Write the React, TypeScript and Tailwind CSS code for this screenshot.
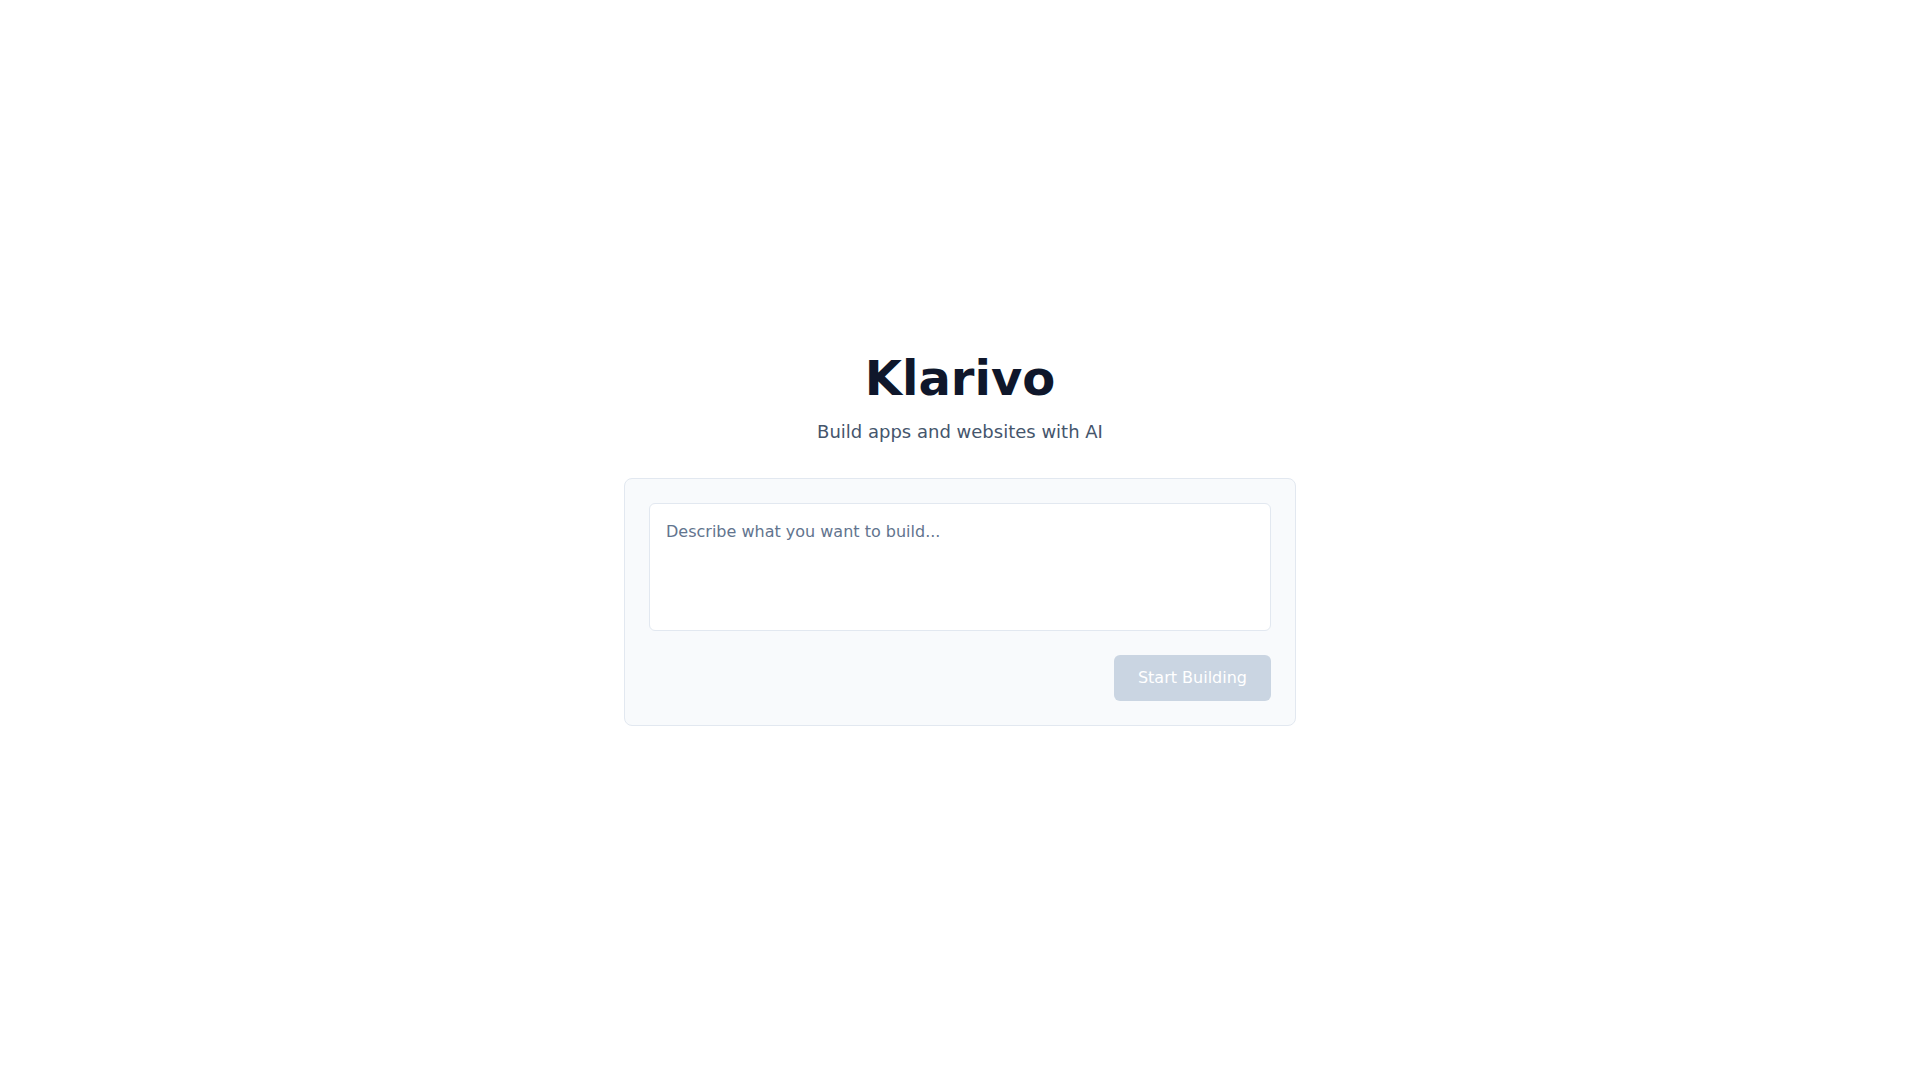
import { useState } from 'react';

export default function App() {
  const [prompt, setPrompt] = useState('');
  const disabled = prompt.trim().length === 0;

  return (
    <div className="flex min-h-screen flex-col items-center justify-center bg-white px-4 font-['DejaVu_Sans',sans-serif]">
      <h1 className="text-5xl font-bold text-slate-900">Klarivo</h1>
      <p className="mt-4 mb-8 text-lg text-slate-600">Build apps and websites with AI</p>

      <div className="w-full max-w-2xl rounded-lg border border-slate-200 bg-slate-50 p-6">
        <textarea
          value={prompt}
          onChange={(e) => setPrompt(e.target.value)}
          placeholder="Describe what you want to build..."
          className="block h-32 w-full resize-none rounded-md border border-slate-200 bg-white p-4 text-base text-slate-900 placeholder:text-slate-500 focus:outline-none"
        />
        <div className="mt-6 flex justify-end">
          <button
            disabled={disabled}
            className="rounded-md bg-slate-300 px-6 py-[11px] text-base leading-6 text-white disabled:cursor-not-allowed"
          >
            Start Building
          </button>
        </div>
      </div>
    </div>
  );
}
